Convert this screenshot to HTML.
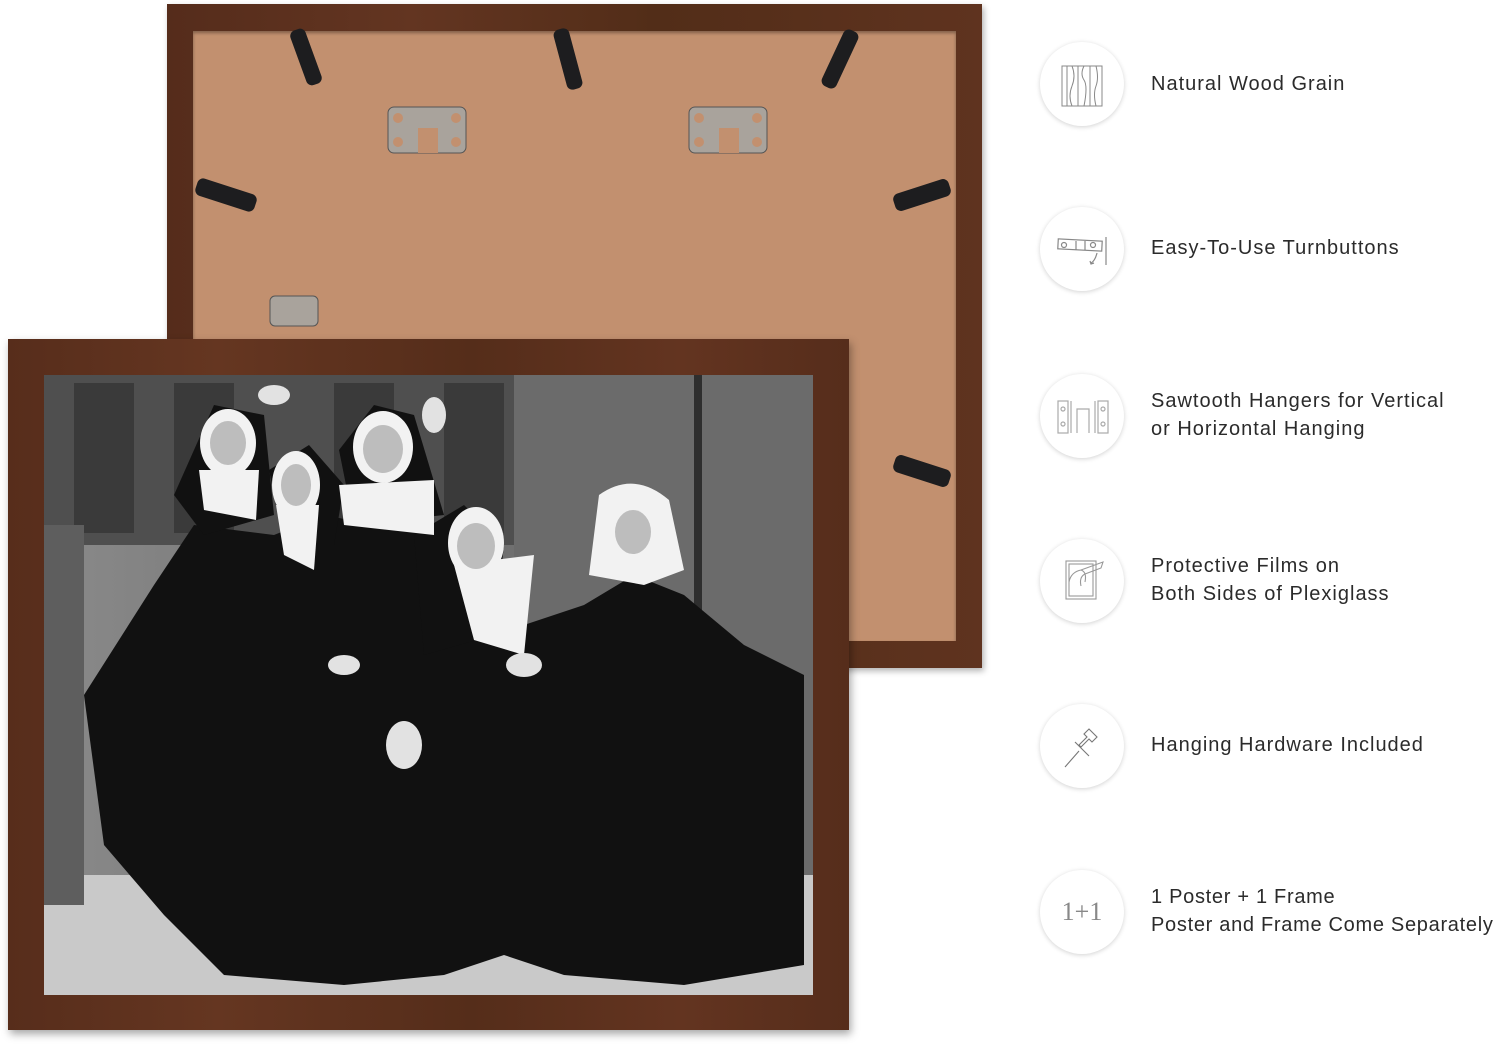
<!DOCTYPE html>
<html><head><meta charset="utf-8"><style>
html,body{margin:0;padding:0;background:#fff;width:1500px;height:1051px;overflow:hidden;position:relative;font-family:"Liberation Sans",sans-serif}
.abs{position:absolute}
.circ{position:absolute;left:1040px;width:84px;height:84px;border-radius:50%;background:#fff;box-shadow:0 1px 5px rgba(0,0,0,.18);}
.circ svg{position:absolute;left:0;top:0}
.t{position:absolute;left:1151px;font-size:20px;line-height:28px;color:#2b2b2b;letter-spacing:1px}
</style></head><body>

<!-- back frame -->
<div class="abs" style="left:167px;top:4px;width:815px;height:664px;background:linear-gradient(90deg,#552c1b,#633521 30%,#522d18 60%,#5f331f);box-shadow:2px 3px 6px rgba(0,0,0,.3)"></div>
<div class="abs" style="left:193px;top:31px;width:763px;height:610px;background:#c2906f;box-shadow:inset 0 2px 3px rgba(0,0,0,.35)"></div>
<svg class="abs" style="left:0;top:0" width="1000" height="680">
 <g fill="#1d1d1f">
  <rect x="298" y="28" width="16" height="58" rx="6" transform="rotate(-20 306 57)"/>
  <rect x="560" y="28" width="16" height="62" rx="6" transform="rotate(-15 568 59)"/>
  <rect x="832" y="28" width="16" height="62" rx="6" transform="rotate(25 840 59)"/>
  <rect x="195" y="186" width="62" height="18" rx="6" transform="rotate(18 226 195)"/>
  <rect x="893" y="186" width="58" height="18" rx="6" transform="rotate(-18 922 195)"/>
  <rect x="893" y="462" width="58" height="18" rx="6" transform="rotate(18 922 471)"/>
 </g>
 <g fill="#a9a39c" stroke="#555" stroke-width="1">
  <rect x="388" y="107" width="78" height="46" rx="6"/>
  <rect x="689" y="107" width="78" height="46" rx="6"/>
  <rect x="270" y="296" width="48" height="30" rx="5"/>
 </g>
 <g fill="#c2906f"><circle cx="398" cy="118" r="5"/><circle cx="398" cy="142" r="5"/><circle cx="456" cy="118" r="5"/><circle cx="456" cy="142" r="5"/>
 <circle cx="699" cy="118" r="5"/><circle cx="699" cy="142" r="5"/><circle cx="757" cy="118" r="5"/><circle cx="757" cy="142" r="5"/>
 <rect x="418" y="128" width="20" height="25"/><rect x="719" y="128" width="20" height="25"/></g>
</svg>

<!-- front frame -->
<div class="abs" style="left:8px;top:339px;width:841px;height:691px;background:linear-gradient(90deg,#572d1b,#653621 25%,#552d1a 55%,#633420 80%,#562d1b);box-shadow:2px 4px 8px rgba(0,0,0,.35)"></div>
<svg class="abs" style="left:44px;top:375px" width="769" height="620" viewBox="0 0 769 620">
 <defs><linearGradient id="bg" x1="0" x2="1"><stop offset="0" stop-color="#8a8a8a"/><stop offset=".55" stop-color="#6e6e6e"/><stop offset="1" stop-color="#7a7a7a"/></linearGradient></defs>
 <rect width="769" height="620" fill="url(#bg)"/>
 <rect x="0" y="0" width="470" height="170" fill="#4f4f4f"/>
 <rect x="30" y="8" width="60" height="150" fill="#3a3a3a"/><rect x="130" y="8" width="60" height="150" fill="#3a3a3a"/><rect x="290" y="8" width="60" height="150" fill="#3a3a3a"/><rect x="400" y="8" width="60" height="150" fill="#3a3a3a"/>
 <rect x="470" y="0" width="299" height="620" fill="#6b6b6b"/>
 <rect x="650" y="0" width="8" height="470" fill="#2e2e2e"/>
 <rect x="0" y="500" width="769" height="120" fill="#c9c9c9"/>
 <rect x="0" y="150" width="40" height="380" fill="#5e5e5e"/>
 <g fill="#111">
  <path d="M40 320 L110 210 L150 150 L230 160 L280 140 L330 150 L380 150 L420 230 L480 250 L540 230 L590 200 L640 220 L700 270 L760 300 L760 590 L640 610 L520 600 L460 580 L400 600 L300 610 L180 600 L120 540 L60 470 Z"/>
  <path d="M130 120 L170 30 L220 40 L230 140 L160 160 Z"/>
  <path d="M225 95 L265 70 L300 110 L290 170 L240 170 Z"/>
  <path d="M295 75 L330 30 L370 40 L400 140 L310 150 Z"/>
  <path d="M370 160 L420 130 L460 170 L450 260 L380 280 Z"/>
 </g>
 <g fill="#f2f2f2">
  <ellipse cx="184" cy="68" rx="28" ry="34"/><path d="M155 95 L215 95 L212 145 L160 135 Z"/>
  <ellipse cx="252" cy="110" rx="24" ry="34"/><path d="M232 130 L275 130 L270 195 L240 180 Z"/>
  <ellipse cx="339" cy="72" rx="30" ry="36"/><path d="M295 110 L390 105 L390 160 L300 150 Z"/>
  <ellipse cx="432" cy="168" rx="28" ry="36"/><path d="M410 190 L490 180 L480 280 L430 265 Z"/>
  <path d="M555 120 Q590 95 625 125 L640 195 L600 210 L545 200 Z"/>
 </g>
 <g fill="#bdbdbd">
  <ellipse cx="184" cy="68" rx="18" ry="22"/><ellipse cx="252" cy="110" rx="15" ry="21"/><ellipse cx="339" cy="74" rx="20" ry="24"/><ellipse cx="432" cy="171" rx="19" ry="23"/><ellipse cx="589" cy="157" rx="18" ry="22"/>
 </g>
 <g fill="#e2e2e2"><ellipse cx="360" cy="370" rx="18" ry="24"/><ellipse cx="300" cy="290" rx="16" ry="10"/><ellipse cx="480" cy="290" rx="18" ry="12"/><ellipse cx="230" cy="20" rx="16" ry="10"/><ellipse cx="390" cy="40" rx="12" ry="18"/></g>
</svg>

<!-- features -->
<div class="circ" style="top:42px"><svg width="84" height="84"><g fill="none" stroke="#888" stroke-width="1"><rect x="22" y="24" width="40" height="40"/><path d="M27 24v40M32 24q4 10 0 20t0 20M38 24v40M44 24q-4 8 0 14t0 26M50 24v40M56 24q3 12 0 20t0 20"/></g></svg></div>
<div class="t" style="top:70px">Natural Wood Grain</div>

<div class="circ" style="top:207px"><svg width="84" height="84"><g fill="none" stroke="#888" stroke-width="1.2"><path d="M18 33h44v10H18z" transform="rotate(3 40 38)"/><circle cx="24" cy="38" r="2.5"/><circle cx="53" cy="38" r="2.5"/><path d="M36 34v9M45 34v9M66 30v28M57 46q-2 8-6 10M50 54l1 3 3-1"/></g></svg></div>
<div class="t" style="top:234px">Easy-To-Use Turnbuttons</div>

<div class="circ" style="top:374px"><svg width="84" height="84"><g fill="none" stroke="#aaa" stroke-width="1.2"><rect x="18" y="27" width="10" height="32"/><rect x="58" y="27" width="10" height="32"/><path d="M31 27v32M55 27v32M37 59V35h12v24"/><circle cx="23" cy="35" r="2"/><circle cx="23" cy="50" r="2"/><circle cx="63" cy="35" r="2"/><circle cx="63" cy="50" r="2"/></g></svg></div>
<div class="t" style="top:387px">Sawtooth Hangers for Vertical<br>or Horizontal Hanging</div>

<div class="circ" style="top:539px"><svg width="84" height="84"><g fill="none" stroke="#999" stroke-width="1.1"><rect x="26" y="22" width="30" height="38"/><rect x="29" y="25" width="24" height="32"/><path d="M29 43q2-10 12-12l22-8-2 6-16 6q-6 3-4 12M41 31q6 2 4 12"/></g></svg></div>
<div class="t" style="top:552px">Protective Films on<br>Both Sides of Plexiglass</div>

<div class="circ" style="top:704px"><svg width="84" height="84"><g fill="none" stroke="#777" stroke-width="1.1"><path d="M25 63l14-16M35 38l14 14M41 43l8-8 3 3 5-5-8-8-5 5 3 3-8 8z"/></g></svg></div>
<div class="t" style="top:731px">Hanging Hardware Included</div>

<div class="circ" style="top:870px"><div style="position:absolute;left:0;width:84px;top:27px;text-align:center;font-family:'Liberation Serif',serif;font-size:26px;color:#888">1+1</div></div>
<div class="t" style="top:883px;letter-spacing:.7px">1 Poster + 1 Frame<br>Poster and Frame Come Separately</div>

</body></html>
